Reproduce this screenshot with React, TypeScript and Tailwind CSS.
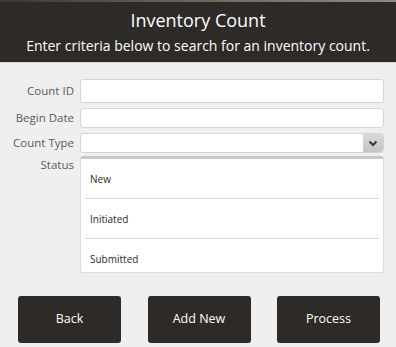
import React from 'react'

const font = { fontFamily: '"Open Sans", "Noto Sans", sans-serif' }

function Field({ label, children }: { label: string; children: React.ReactNode }) {
    return (
        <div className="flex items-center">
            <label className="w-[80px] pr-[6px] text-right text-[11.5px] text-[#5a5a5a]">{label}</label>
            <div className="flex-1">{children}</div>
        </div>
    )
}

export default function App() {
    const statuses = ['New', 'Initiated', 'Submitted']

    return (
        <div className="w-[396px] h-[347px] overflow-hidden bg-[#efefef] flex flex-col" style={font}>
            <div className="h-[2px] bg-gradient-to-r from-[#3a3a2a] via-[#6a6a5a] to-[#8a8a8a]" />
            <header className="h-[61px] bg-[#2d2a27] flex flex-col items-center pt-[6px] text-white border-b border-[#d6d6d6]">
                <h1 className="text-[18px] leading-[24px]">Inventory Count</h1>
                <p className="text-[14px] leading-[20px] mt-[4px]">Enter criteria below to search for an inventory count.</p>
            </header>

            <div className="flex flex-col gap-[5px] pt-[16px] pr-[12px]">
                <Field label="Count ID">
                    <div className="h-[24px] rounded-[3px] border border-[#d4d4d4] bg-white" />
                </Field>
                <Field label="Begin Date">
                    <div className="h-[20px] rounded-[3px] border border-[#d4d4d4] bg-white" />
                </Field>
                <Field label="Count Type">
                    <div className="h-[20px] rounded-[3px] border border-[#d4d4d4] bg-white flex justify-end">
                        <div className="w-[20px] h-full rounded-r-[3px] bg-gradient-to-b from-[#d9d9d9] to-[#c4c4c4] flex items-center justify-center">
                            <svg width="10" height="7" viewBox="0 0 10 7">
                                <path d="M1.5 1.5 L5 5 L8.5 1.5" fill="none" stroke="#3a3a3a" strokeWidth="2" />
                            </svg>
                        </div>
                    </div>
                </Field>
                <div className="flex items-start -mt-[2px]">
                    <label className="w-[80px] pr-[6px] text-right text-[11.5px] text-[#5a5a5a] leading-[18px]">Status</label>
                    <div className="flex-1 h-[117px] overflow-hidden rounded-[3px] bg-white border border-[#dcdcdc] border-t-[3px] border-t-[#c3cbc7] px-[4px] flex flex-col">
                        {statuses.map((s) => (
                            <div
                                key={s}
                                className="shrink-0 h-[40px] flex items-center pt-[1px] pl-[5px] text-[10px] text-[#2a2a2a] border-b border-[#dadada]"
                            >
                                {s}
                            </div>
                        ))}
                    </div>
                </div>
            </div>

            <div className="flex justify-between pl-[18px] pr-[16px] mt-[23px]">
                {['Back', 'Add New', 'Process'].map((b) => (
                    <button key={b} className="w-[103px] h-[47px] rounded-[3px] bg-[#2d2a27] text-white text-[12.5px]">
                        {b}
                    </button>
                ))}
            </div>
        </div>
    )
}
